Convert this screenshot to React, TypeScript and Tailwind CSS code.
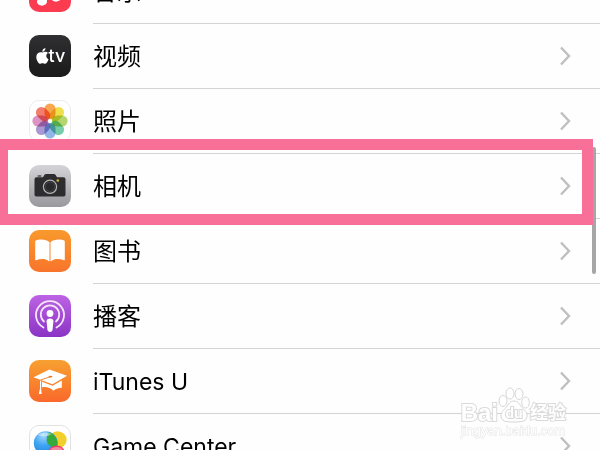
import type { ReactNode } from 'react';

const petals = [
    { angle: 0, color: '#f9a64f' },
    { angle: 45, color: '#eee04c' },
    { angle: 90, color: '#b4d670' },
    { angle: 135, color: '#78cda9' },
    { angle: 180, color: '#90b6e8' },
    { angle: 225, color: '#a998d2' },
    { angle: 270, color: '#dd94c2' },
    { angle: 315, color: '#f27e6e' },
];

const MusicIcon = () => (
    <svg viewBox="0 0 42 42" className="w-full h-full" fill="#fff">
        <path d="M15 11l17-4v21a5 4 0 1 1-3-4V14l-11 3v15a5 4 0 1 1-3-4z" />
    </svg>
);

const TvIcon = () => (
    <span className="flex items-center justify-center w-full h-full text-white">
        <svg viewBox="5 11 14 18" className="w-3.5 h-[18px]" fill="currentColor">
            <path d="M12.3 16.6c-1.5-.7-2.900-.6-4.100.3-2.300 1.700-2.200 5.200-1 7.900.7 1.500 1.600 2.900 2.700 3 .9 0 1.400-.6 2.600-.6s1.700.6 2.600.6c1.100-.1 1.900-1.200 2.500-2.200.5-.8.8-1.700.9-2.300-1.500-.7-2.200-1.800-2.200-3.200 0-1.300.6-2.300 1.700-3-1.200-1.500-3.300-1.700-5.700-.5z" />
            <path d="M12.300 15.800c-.2-1.900 1.400-3.600 3.100-3.800.2 1.900-1.300 3.700-3.100 3.800z" />
        </svg>
        <span className="text-lg leading-5 font-medium">tv</span>
    </span>
);

const PhotosIcon = () => (
    <svg viewBox="0 0 42 42" className="w-full h-full">
        {petals.map((petal) => (
            <rect
                key={petal.angle}
                x="15.200"
                y="2.500"
                width="11.600"
                height="16.500"
                rx="5.800"
                fill={petal.color}
                transform={`rotate(${petal.angle} 21 21)`}
                style={{ mixBlendMode: 'multiply' }}
            />
        ))}
        <circle cx="21" cy="21" r="2" fill="#fff" />
    </svg>
);

const CameraIcon = () => (
    <svg viewBox="0 0 42 42" className="w-full h-full">
        <path d="M5.500 14.200q0-2 2-2h6.500l1.500-2.400q.6-.8 1.600-.8h7.800q1 0 1.600.8l1.500 2.400h6.500q2 0 2 2v15.600q0 1.700-1.700 1.700H7.200q-1.700 0-1.700-1.700z" fill="#2d2d30" />
        <rect x="8.500" y="10.300" width="4" height="1.500" rx=".7" fill="#4a4a4e" />
        <circle cx="21" cy="21.800" r="6.600" fill="#29292c" stroke="#b5b5b8" strokeWidth="1.200" />
        <circle cx="21" cy="21.800" r="4.600" fill="none" stroke="#414146" strokeWidth="1" />
        <circle cx="28.800" cy="15.500" r="1.300" fill="#d7b72c" />
    </svg>
);

const BooksIcon = () => (
    <svg viewBox="0 0 42 42" className="w-full h-full" fill="#fff">
        <path d="M20.500 12.200C18 9.300 11 8.500 6.800 10.500q-.6.300-.6 1v18q0 1 .9.700c4.500-1.700 10-1.500 12.500.9q.9.700.9-.4zM21.500 12.200c2.500-2.900 9.500-3.700 13.700-1.700q.6.300.6 1v18q0 1-.9.700c-4.500-1.700-10-1.500-12.500.9q-.9.700-.9-.4z" />
    </svg>
);

const PodcastsIcon = () => (
    <svg viewBox="0 0 42 42" className="w-full h-full" fill="none" stroke="#f6e6fc" strokeLinecap="round">
        <path d="M14.500 32.500a14 14 0 1 1 13 0" strokeWidth="1.800" />
        <path d="M15 26.500a9.200 9.200 0 1 1 12 0" strokeWidth="1.800" />
        <circle cx="21" cy="18.500" r="3.400" fill="#fff" stroke="none" />
        <path d="M17.600 26.300c0-1.800 1.300-2.800 3.400-2.800s3.400 1 3.400 2.800l-.8 8.300c-.2 1.600-1.100 2.400-2.600 2.400s-2.400-.8-2.600-2.400z" fill="#fff" stroke="none" />
    </svg>
);

const ITunesUIcon = () => (
    <svg viewBox="0 0 42 42" className="w-full h-full">
        <path d="M4.500 17.200L20.500 9.500l17.500 6.200-14.500 8.500z" fill="#fff" />
        <path d="M13 21.800l10.500 3.900 9.300-5.300v7.300c-4 .1-6.600 1.300-8.300 3-3.500-3.200-7-4.200-11.500-3.400z" fill="#fff" />
        <path d="M21.500 16.700l-10 3.300-.3 8" fill="none" stroke="#f58a2b" strokeWidth="1" />
        <path d="M11 20.500v8l-1.200 5.500h2.900l-.6-5.500v-7.600z" fill="#fff" />
        <ellipse cx="21.500" cy="16.600" rx="2" ry=".9" fill="#e47a20" />
    </svg>
);

const GameCenterIcon = () => (
    <svg viewBox="0 0 42 42" className="w-full h-full">
        <defs>
            <radialGradient id="bubble-blue" cx=".4" cy=".2" r=".8">
                <stop offset="0" stopColor="#9fd5fb" />
                <stop offset=".5" stopColor="#3fa4f2" />
                <stop offset="1" stopColor="#2388e0" />
            </radialGradient>
        </defs>
        <ellipse cx="29" cy="14.500" rx="9.500" ry="9" fill="#f2cf2a" />
        <circle cx="16.500" cy="18" r="12.500" fill="url(#bubble-blue)" />
        <path d="M20 6.500a12.500 12.500 0 0 1 8.500 15q-8 3-11-6 0-6 2.500-9z" fill="#36a93b" />
        <path d="M8 9.500q7-5 15-1-6 4-15 1z" fill="#fff" opacity=".45" />
        <ellipse cx="28" cy="28" rx="8.500" ry="7.500" fill="#ee3b65" />
        <path d="M21 24.500q7-5 14 0-7 3-14 0z" fill="#fff" opacity=".4" />
    </svg>
);

interface SettingsItem {
    id: string;
    label: string;
    labelSize: string;
    tile: string;
    icon: ReactNode;
    highlighted?: boolean;
}

const items: SettingsItem[] = [
    { id: 'music', label: '音乐', labelSize: 'text-2xl', tile: 'bg-[#fb3c50]', icon: <MusicIcon /> },
    { id: 'tv', label: '视频', labelSize: 'text-2xl', tile: 'bg-linear-to-b from-[#303032] to-[#1a1a1b]', icon: <TvIcon /> },
    { id: 'photos', label: '照片', labelSize: 'text-2xl', tile: 'bg-white border border-[#ececec]', icon: <PhotosIcon /> },
    { id: 'camera', label: '相机', labelSize: 'text-2xl', tile: 'bg-linear-to-b from-[#d5d5d8] to-[#98989d]', icon: <CameraIcon />, highlighted: true },
    { id: 'books', label: '图书', labelSize: 'text-2xl', tile: 'bg-linear-to-b from-[#f8992c] to-[#f8742c]', icon: <BooksIcon /> },
    { id: 'podcasts', label: '播客', labelSize: 'text-2xl', tile: 'bg-linear-to-b from-[#bd62e4] to-[#8b33c4]', icon: <PodcastsIcon /> },
    { id: 'itunes-u', label: 'iTunes U', labelSize: 'text-[23px]', tile: 'bg-linear-to-b from-[#f7a030] to-[#f9682b]', icon: <ITunesUIcon /> },
    { id: 'game-center', label: 'Game Center', labelSize: 'text-[23px]', tile: 'bg-white border border-[#e2e2e2]', icon: <GameCenterIcon /> },
];

const SettingsRow = ({ item }: { item: SettingsItem }) => (
    <li className="relative">
        <button type="button" className="flex w-full h-[65px] pl-[29px] text-left">
            <span className="flex items-center h-16 pr-[22px] shrink-0">
                <span className={`block w-[42px] h-[42px] rounded-[10px] overflow-hidden ${item.tile}`}>
                    {item.icon}
                </span>
            </span>
            <span className="flex flex-1 items-center justify-between h-full pr-[29px] border-b border-[#d4d4d6]">
                <span className={`pt-0.5 leading-8 text-black ${item.labelSize}`}>{item.label}</span>
                <svg viewBox="0 0 12 20" className="w-3 h-5" fill="none" stroke="#bfbfc1" strokeWidth="2.400">
                    <path d="M2 1.500l8 8.500-8 8.500" />
                </svg>
            </span>
        </button>
        {item.highlighted && (
            <div className="absolute z-20 left-0 right-[7px] -top-[15px] -bottom-1.5 border-[11px] border-l-8 border-[#f86f97] pointer-events-none" />
        )}
    </li>
);

const Watermark = () => (
    <div className="absolute z-10 right-[34px] bottom-[11px] text-white pointer-events-none font-['Liberation_Sans','Noto_Sans_CJK_SC',sans-serif]">
        <div className="flex items-end h-9">
            <span className="text-2xl leading-5 font-bold [-webkit-text-stroke:2px_#dadada] [paint-order:stroke_fill]">Bai</span>
            <span className="relative flex w-8 h-9 items-end justify-center">
                <svg viewBox="0 0 32 36" className="absolute inset-0 w-full h-full" fill="#fff" stroke="#d6d6d6">
                    <path d="M16 14c4 0 5.500 3.500 8 6.500s5.500 5 5 9c-.6 4.500-4 5.500-13 5.500s-12.400-1-13-5.500c-.5-4 2.500-6 5-9s4-6.500 8-6.500z" />
                    <ellipse cx="5" cy="14" rx="4" ry="5.500" />
                    <ellipse cx="12" cy="6.500" rx="4" ry="5.500" />
                    <ellipse cx="21" cy="7" rx="4" ry="5.500" />
                    <ellipse cx="27.500" cy="15.500" rx="3.800" ry="5.500" />
                </svg>
                <span className="relative pb-1 text-sm leading-3 font-bold [-webkit-text-stroke:2px_#dadada] [paint-order:stroke_fill]">du</span>
            </span>
            <span className="text-lg leading-5 font-bold [-webkit-text-stroke:2px_#dadada] [paint-order:stroke_fill]">经验</span>
        </div>
        <div className="text-[13px] leading-4 [-webkit-text-stroke:1px_#e4e4e4] [paint-order:stroke_fill]">jingyan.baidu.com</div>
    </div>
);

const App = () => {
    return (
        <main className="relative h-screen overflow-hidden bg-[#fefefe] font-['Inter','Noto_Sans_CJK_SC',sans-serif]">
            <ul className="-mt-[41px]">
                {items.map((item) => (
                    <SettingsRow key={item.id} item={item} />
                ))}
            </ul>

            {/* Scroll indicator */}
            <div className="absolute right-1 top-[147px] w-1 h-[127px] rounded-full bg-[#a6a6a8]" />

            <Watermark />
        </main>
    );
};

export default App;
